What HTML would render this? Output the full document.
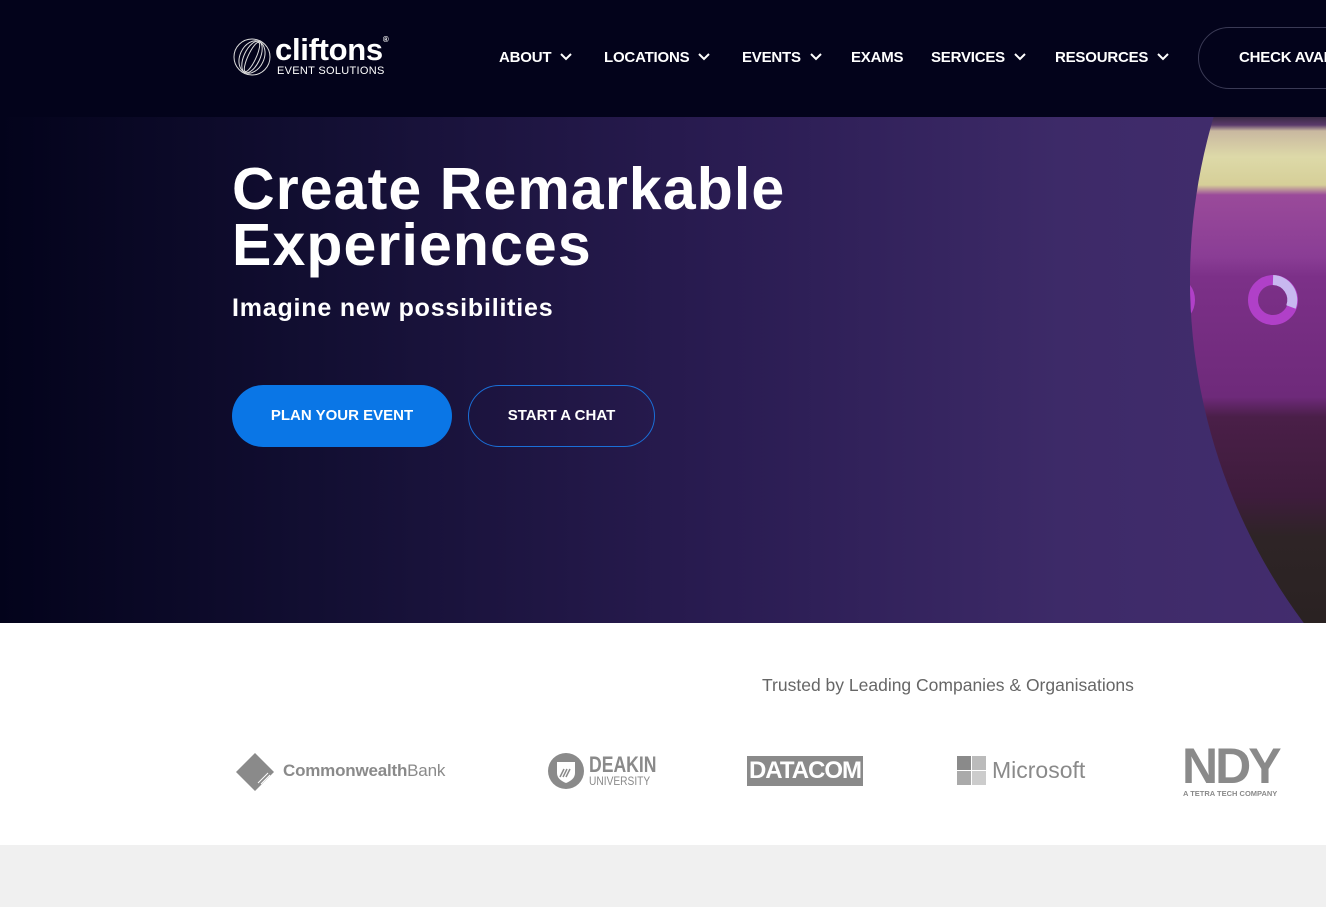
<!DOCTYPE html>
<html><head><meta charset="utf-8"><style>
*{margin:0;padding:0;box-sizing:border-box}
html,body{width:1326px;height:907px;overflow:hidden}
body{font-family:"Liberation Sans",sans-serif;background:#f0f0f0;position:relative}
.hdr{position:absolute;left:0;top:0;width:1326px;height:117px;background:#03031b;overflow:hidden}
.nav{position:absolute;top:49px;color:#fff;font-weight:bold;font-size:15px;letter-spacing:-0.2px;white-space:nowrap}
.nav svg{margin-left:9px;vertical-align:1px}
.hero{position:absolute;left:0;top:117px;width:1326px;height:506px;background:linear-gradient(90deg,#03031b 0%,#130f33 25%,#2a1c52 55%,#3d2a68 80%,#432d6e 100%);overflow:hidden}
.circ{position:absolute;left:1190px;top:-411px;width:1148px;height:1148px;border-radius:50%;overflow:hidden}
.inner{position:absolute;left:0;top:411px;width:1148px;height:506px;background:linear-gradient(180deg,#3a2a45 0px,#5a3a6a 8px,#c9b8a0 14px,#ddd9a8 40px,#d6cf98 68px,#9a4a9a 78px,#8a3d95 140px,#7c3088 160px,#6e2a7a 280px,#4a1f48 300px,#3e1c3c 380px,#2e2426 420px,#2a2222 506px)}
.white{position:absolute;left:0;top:623px;width:1326px;height:222px;background:#fff}
.logo{position:absolute;color:#8a8a8a;white-space:nowrap}
</style></head><body>
<div class="hdr">
 <svg style="position:absolute;left:232px;top:37px" width="40" height="40" viewBox="0 0 40 40"><g fill="none" stroke="#ddd" stroke-width="1"><circle cx="20" cy="20" r="18"/><ellipse cx="20" cy="20" rx="8" ry="17" transform="rotate(25 20 20)"/><ellipse cx="20" cy="20" rx="12" ry="17" transform="rotate(25 20 20)"/><ellipse cx="20" cy="20" rx="4" ry="16" transform="rotate(25 20 20)"/></g></svg>
 <div style="position:absolute;left:275px;top:32px;color:#fff;font-size:31px;font-weight:bold;letter-spacing:-0.3px">cliftons<span style="font-size:8px;vertical-align:18px">®</span></div>
 <div style="position:absolute;left:277px;top:65px;color:#fff;font-size:11px;letter-spacing:0.3px">EVENT SOLUTIONS</div>
 <div class="nav" style="left:499px">ABOUT<svg width="12" height="8" viewBox="0 0 12 8"><path d="M1 1l5 5 5-5" stroke="#fff" stroke-width="2" fill="none"/></svg></div>
 <div class="nav" style="left:604px">LOCATIONS<svg width="12" height="8" viewBox="0 0 12 8"><path d="M1 1l5 5 5-5" stroke="#fff" stroke-width="2" fill="none"/></svg></div>
 <div class="nav" style="left:742px">EVENTS<svg width="12" height="8" viewBox="0 0 12 8"><path d="M1 1l5 5 5-5" stroke="#fff" stroke-width="2" fill="none"/></svg></div>
 <div class="nav" style="left:851px">EXAMS</div>
 <div class="nav" style="left:931px">SERVICES<svg width="12" height="8" viewBox="0 0 12 8"><path d="M1 1l5 5 5-5" stroke="#fff" stroke-width="2" fill="none"/></svg></div>
 <div class="nav" style="left:1055px">RESOURCES<svg width="12" height="8" viewBox="0 0 12 8"><path d="M1 1l5 5 5-5" stroke="#fff" stroke-width="2" fill="none"/></svg></div>
 <div style="position:absolute;left:1198px;top:27px;width:200px;height:62px;border:1px solid #3a3a55;border-radius:31px"></div>
 <div class="nav" style="left:1239px">CHECK AVAILABILITY</div>
</div>
<div class="hero">
 <div class="circ"><div class="inner">
  <svg style="position:absolute;left:55px;top:155px" width="56" height="56" viewBox="0 0 56 56"><circle cx="28" cy="28" r="20" fill="none" stroke="#b040c8" stroke-width="10"/><path d="M28 8a20 20 0 0 1 18 27" fill="none" stroke="#c8b8f0" stroke-width="10"/></svg>
  <svg style="position:absolute;left:-20px;top:155px" width="30" height="56" viewBox="0 0 30 56"><circle cx="0" cy="28" r="20" fill="none" stroke="#b040c8" stroke-width="10"/></svg>
 </div></div>
 <div style="position:absolute;left:232px;top:44px;color:#fff;font-size:59px;font-weight:bold;line-height:56px;letter-spacing:1.1px">Create Remarkable<br>Experiences</div>
 <div style="position:absolute;left:232px;top:177px;color:#fff;font-size:25px;font-weight:bold;letter-spacing:0.8px">Imagine new possibilities</div>
 <div style="position:absolute;left:232px;top:268px;width:220px;height:62px;border-radius:31px;background:#0a76e6;color:#fff;font-weight:bold;font-size:15px;text-align:center;line-height:62px">PLAN YOUR EVENT</div>
 <div style="position:absolute;left:468px;top:268px;width:187px;height:62px;border-radius:31px;border:1px solid #1a6fd8;color:#fff;font-weight:bold;font-size:15px;text-align:center;line-height:60px">START A CHAT</div>
</div>
<div class="white">
 <div style="position:absolute;left:762px;top:52px;color:#666;font-size:17.5px">Trusted by Leading Companies &amp; Organisations</div>
 <svg style="position:absolute;left:236px;top:130px" width="38" height="38" viewBox="0 0 38 38"><path d="M19 0L38 19 19 38 0 19z" fill="#8a8a8a"/><path d="M22 30l10-10M25 31l9-9M28 32l6-6" stroke="#fff" stroke-width="1"/></svg>
 <div class="logo" style="left:283px;top:138px;font-size:17px;letter-spacing:-0.2px"><b>Commonwealth</b>Bank</div>
 <svg style="position:absolute;left:548px;top:130px" width="36" height="36" viewBox="0 0 36 36"><circle cx="18" cy="18" r="18" fill="#8a8a8a"/><path d="M9 9h18v11c0 5-4 8-9 10-5-2-9-5-9-10z" fill="#fff"/><path d="M12 24l4-8M15 24l4-8M18 24l4-8" stroke="#8a8a8a" stroke-width="1.5"/></svg>
 <div class="logo" style="left:589px;top:132px;font-size:22px;font-weight:bold;line-height:20px;transform:scaleX(0.8);transform-origin:left">DEAKIN</div>
 <div class="logo" style="left:589px;top:152px;font-size:12px;line-height:12px;transform:scaleX(0.85);transform-origin:left">UNIVERSITY</div>
 <div class="logo" style="left:747px;top:133px;width:116px;height:30px;background:#8a8a8a;color:#fff;font-size:24px;font-weight:bold;line-height:30px;text-align:center;letter-spacing:-1px">DATACOM</div>
 <svg style="position:absolute;left:957px;top:133px" width="29" height="29"><rect width="14" height="14" fill="#8a8a8a"/><rect x="15" width="14" height="14" fill="#bbb"/><rect y="15" width="14" height="14" fill="#aaa"/><rect x="15" y="15" width="14" height="14" fill="#ccc"/></svg>
 <div class="logo" style="left:992px;top:134px;font-size:23px">Microsoft</div>
 <div class="logo" style="left:1182px;top:118px;font-size:50px;font-weight:bold;line-height:50px;letter-spacing:-3px">NDY</div>
 <div class="logo" style="left:1183px;top:166px;font-size:7.5px;font-weight:bold">A TETRA TECH COMPANY</div>
</div>
</body></html>
